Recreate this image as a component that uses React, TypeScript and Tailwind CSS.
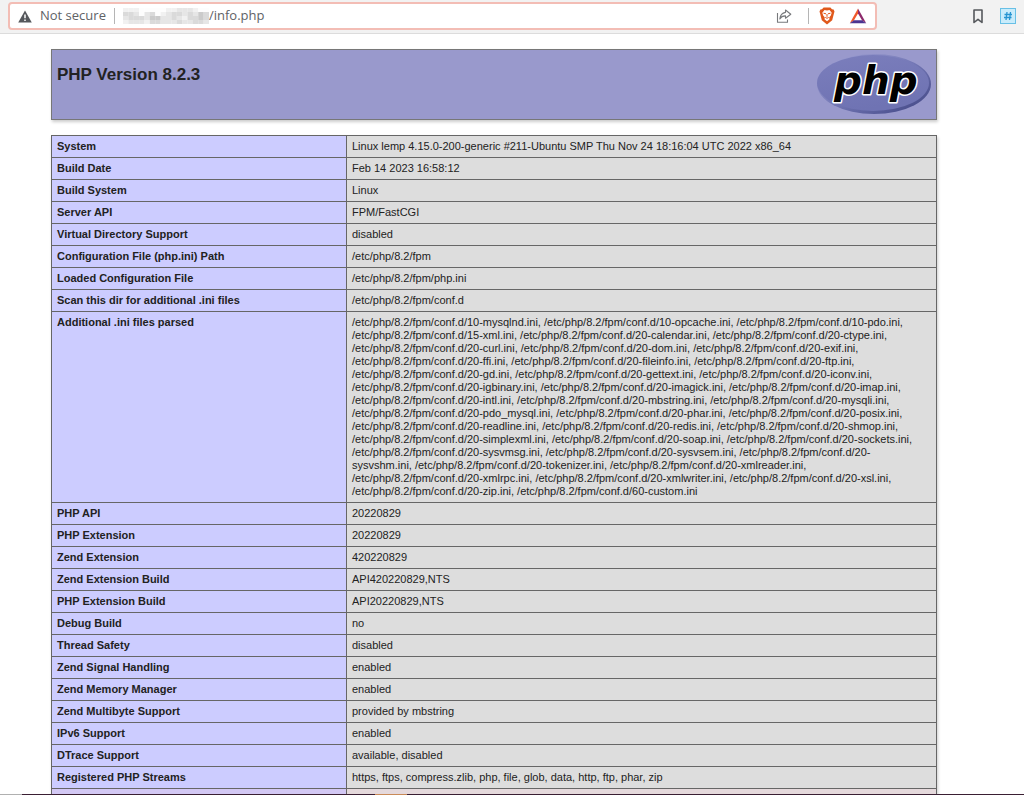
type InfoRow = {
    name: string;
    value: string | string[];
};

const rows: InfoRow[] = [
    {
        name: "System",
        value: "Linux lemp 4.15.0-200-generic #211-Ubuntu SMP Thu Nov 24 18:16:04 UTC 2022 x86_64",
    },
    { name: "Build Date", value: "Feb 14 2023 16:58:12" },
    { name: "Build System", value: "Linux" },
    { name: "Server API", value: "FPM/FastCGI" },
    { name: "Virtual Directory Support", value: "disabled" },
    { name: "Configuration File (php.ini) Path", value: "/etc/php/8.2/fpm" },
    { name: "Loaded Configuration File", value: "/etc/php/8.2/fpm/php.ini" },
    {
        name: "Scan this dir for additional .ini files",
        value: "/etc/php/8.2/fpm/conf.d",
    },
    {
        name: "Additional .ini files parsed",
        value: [
            "/etc/php/8.2/fpm/conf.d/10-mysqlnd.ini, /etc/php/8.2/fpm/conf.d/10-opcache.ini, /etc/php/8.2/fpm/conf.d/10-pdo.ini,",
            "/etc/php/8.2/fpm/conf.d/15-xml.ini, /etc/php/8.2/fpm/conf.d/20-calendar.ini, /etc/php/8.2/fpm/conf.d/20-ctype.ini,",
            "/etc/php/8.2/fpm/conf.d/20-curl.ini, /etc/php/8.2/fpm/conf.d/20-dom.ini, /etc/php/8.2/fpm/conf.d/20-exif.ini,",
            "/etc/php/8.2/fpm/conf.d/20-ffi.ini, /etc/php/8.2/fpm/conf.d/20-fileinfo.ini, /etc/php/8.2/fpm/conf.d/20-ftp.ini,",
            "/etc/php/8.2/fpm/conf.d/20-gd.ini, /etc/php/8.2/fpm/conf.d/20-gettext.ini, /etc/php/8.2/fpm/conf.d/20-iconv.ini,",
            "/etc/php/8.2/fpm/conf.d/20-igbinary.ini, /etc/php/8.2/fpm/conf.d/20-imagick.ini, /etc/php/8.2/fpm/conf.d/20-imap.ini,",
            "/etc/php/8.2/fpm/conf.d/20-intl.ini, /etc/php/8.2/fpm/conf.d/20-mbstring.ini, /etc/php/8.2/fpm/conf.d/20-mysqli.ini,",
            "/etc/php/8.2/fpm/conf.d/20-pdo_mysql.ini, /etc/php/8.2/fpm/conf.d/20-phar.ini, /etc/php/8.2/fpm/conf.d/20-posix.ini,",
            "/etc/php/8.2/fpm/conf.d/20-readline.ini, /etc/php/8.2/fpm/conf.d/20-redis.ini, /etc/php/8.2/fpm/conf.d/20-shmop.ini,",
            "/etc/php/8.2/fpm/conf.d/20-simplexml.ini, /etc/php/8.2/fpm/conf.d/20-soap.ini, /etc/php/8.2/fpm/conf.d/20-sockets.ini,",
            "/etc/php/8.2/fpm/conf.d/20-sysvmsg.ini, /etc/php/8.2/fpm/conf.d/20-sysvsem.ini, /etc/php/8.2/fpm/conf.d/20-",
            "sysvshm.ini, /etc/php/8.2/fpm/conf.d/20-tokenizer.ini, /etc/php/8.2/fpm/conf.d/20-xmlreader.ini,",
            "/etc/php/8.2/fpm/conf.d/20-xmlrpc.ini, /etc/php/8.2/fpm/conf.d/20-xmlwriter.ini, /etc/php/8.2/fpm/conf.d/20-xsl.ini,",
            "/etc/php/8.2/fpm/conf.d/20-zip.ini, /etc/php/8.2/fpm/conf.d/60-custom.ini",
        ],
    },
    { name: "PHP API", value: "20220829" },
    { name: "PHP Extension", value: "20220829" },
    { name: "Zend Extension", value: "420220829" },
    { name: "Zend Extension Build", value: "API420220829,NTS" },
    { name: "PHP Extension Build", value: "API20220829,NTS" },
    { name: "Debug Build", value: "no" },
    { name: "Thread Safety", value: "disabled" },
    { name: "Zend Signal Handling", value: "enabled" },
    { name: "Zend Memory Manager", value: "enabled" },
    { name: "Zend Multibyte Support", value: "provided by mbstring" },
    { name: "IPv6 Support", value: "enabled" },
    { name: "DTrace Support", value: "available, disabled" },
    {
        name: "Registered PHP Streams",
        value: "https, ftps, compress.zlib, php, file, glob, data, http, ftp, phar, zip",
    },
];

// gray levels of the pixelated host name, one string per row
const mosaic = ["1110000011222100", "3320230123323243", "2333244223213343", "1222133222322332"];
const grays = ["#fdfdfd", "#f1f1f1", "#e6e6e6", "#dadada", "#cbcbcb"];

function HiddenHost() {
    return (
        <svg viewBox="0 0 88 16" className="h-4 w-[86px] shrink-0" preserveAspectRatio="none" aria-hidden="true">
            {mosaic.map((line, y) =>
                line.split("").map((level, x) => (
                    <rect
                        key={`${x}-${y}`}
                        x={x * 5.5}
                        y={y * 4}
                        width="5.6"
                        height="4.1"
                        fill={grays[Number(level)]}
                    />
                ))
            )}
        </svg>
    );
}

function WarningIcon() {
    return (
        <svg viewBox="0 0 14 13" className="h-[13px] w-3.5 shrink-0">
            <path d="M7 0.5 13.8 12.5H0.2Z" fill="#55585c" />
            <path d="M7 4.5V8.3M7 9.5V11" stroke="#fff" strokeWidth="1.5" />
        </svg>
    );
}

function ShareIcon() {
    return (
        <svg
            viewBox="0 0 16 14"
            className="h-3.5 w-4"
            fill="none"
            stroke="#77797c"
            strokeWidth="1.1"
            strokeLinejoin="round"
        >
            <path d="M1.5 4V13.2H11.5V10.5" />
            <path d="M9.5 1 14.8 5.2 9.5 9.2V6.9C7 6.8 5 7.8 3.8 10 4.2 6.5 6 3.9 9.5 3.4Z" />
        </svg>
    );
}

function BraveIcon() {
    return (
        <svg viewBox="0 0 16 18" className="h-[18px] w-4">
            <path
                d="M4.6 0.5H11.4L13 2.3 14.6 2.5 15.5 4.6 15 6.2 13.2 13.2 8 17.5 2.8 13.2 1 6.2 0.5 4.6 1.4 2.5 3 2.3Z"
                fill="#e0581b"
            />
            <path
                d="M8 3.5 10.5 3.1 12.7 5.8 11.8 8.6 10.2 10.4 10.5 12.2 8 14.3 5.5 12.2 5.8 10.4 4.2 8.6 3.3 5.8 5.5 3.1Z"
                fill="#fff"
            />
            <path
                d="M4.5 6.2 7 6.8M11.5 6.2 9 6.8M8 7V9.8M6.3 10.4 8 11.3 9.7 10.4"
                fill="none"
                stroke="#e0581b"
                strokeWidth="1"
            />
        </svg>
    );
}

function RewardsIcon() {
    return (
        <svg viewBox="0 0 18 16" className="h-4 w-[18px]">
            <path d="M9 0.5 0.8 15.2 5 12.2 9 5.5Z" fill="#f0592b" />
            <path d="M9 0.5 17.2 15.2 13 12.2 9 5.5Z" fill="#8d2a6c" />
            <path d="M0.8 15.2H17.2L13 12.2H5Z" fill="#4c3590" />
        </svg>
    );
}

function BookmarkIcon() {
    return (
        <svg viewBox="0 0 10 15" className="h-[15px] w-2.5">
            <path
                d="M1 1H9V13.5L5 10.3 1 13.5Z"
                fill="none"
                stroke="#55585c"
                strokeWidth="1.6"
                strokeLinejoin="round"
            />
        </svg>
    );
}

function HashIcon() {
    return (
        <svg viewBox="0 0 16 16" className="h-4 w-4">
            <rect x="0.5" y="0.5" width="15" height="15" fill="#c9ecfb" stroke="#68c0e6" />
            <path
                d="M7 4 6 12M10.5 4 9.5 12M4.5 6.5H12M4 9.5H11.5"
                stroke="#2795d2"
                strokeWidth="1.3"
            />
        </svg>
    );
}

function PhpLogo() {
    return (
        <svg viewBox="0 0 116 62" className="h-[62px] w-[116px]" role="img" aria-label="PHP logo">
            <defs>
                <linearGradient id="rim" x1="0" y1="0" x2="1" y2="1">
                    <stop offset="0" stopColor="#a6a7d8" />
                    <stop offset="0.5" stopColor="#7377b5" />
                    <stop offset="1" stopColor="#3d4280" />
                </linearGradient>
                <linearGradient id="face" x1="0" y1="0" x2="0.3" y2="1">
                    <stop offset="0" stopColor="#7b7ebc" />
                    <stop offset="1" stopColor="#6f73b3" />
                </linearGradient>
            </defs>
            <ellipse cx="58" cy="30" rx="57" ry="30" fill="url(#rim)" />
            <ellipse cx="57" cy="29" rx="56" ry="28" fill="url(#face)" />
            <text
                x="18"
                y="40"
                fontSize="39"
                fill="#000"
                stroke="#fff"
                strokeWidth="3"
                paintOrder="stroke"
                strokeLinejoin="round"
                className="font-['DejaVu_Sans',sans-serif] font-bold italic"
            >
                php
            </text>
        </svg>
    );
}

function BrowserBar() {
    return (
        <header className="flex h-[34px] shrink-0 items-start border-b border-[#dcdcdc] bg-[#f2f2f2] pt-0.5 pr-2 pl-2 font-['Open_Sans',sans-serif] text-[13px] text-[#606266]">
            <div className="flex h-7 min-w-0 flex-1 items-center rounded border-2 border-[#f3bdb5] bg-white pr-2 pl-2">
                <button className="flex shrink-0 items-center gap-2">
                    <WarningIcon />
                    Not secure
                </button>
                <span className="mx-2 h-4 w-px shrink-0 bg-[#b5b5b5]" />
                <HiddenHost />
                <input
                    aria-label="Address"
                    defaultValue="/info.php"
                    className="min-w-0 flex-1 bg-transparent outline-none"
                />
                <button aria-label="Share this page">
                    <ShareIcon />
                </button>
                <span className="mr-2.5 ml-4 h-4 w-px bg-[#b5b5b5]" />
                <button aria-label="Brave Shields">
                    <BraveIcon />
                </button>
                <button aria-label="Brave Rewards" className="ml-3.5">
                    <RewardsIcon />
                </button>
            </div>
            <div className="ml-24 flex h-7 items-center gap-[17px]">
                <button aria-label="Bookmarks">
                    <BookmarkIcon />
                </button>
                <button aria-label="Extension">
                    <HashIcon />
                </button>
            </div>
        </header>
    );
}

export default function App() {
    return (
        <div className="flex h-screen flex-col overflow-hidden bg-white font-['Liberation_Sans',Arial,sans-serif] text-[#222]">
            <BrowserBar />
            <main className="min-h-0 flex-1 overflow-hidden pt-[15px] pr-[87px] pl-[51px]">
                <div className="mb-[15px] flex h-[71px] items-start justify-between border border-[#777] bg-[#9999cc] pt-1 pr-1 pl-[5px] shadow-[1px_2px_3px_#ccc]">
                    <h1 className="pt-[11px] text-[17px] leading-5 font-bold">PHP Version 8.2.3</h1>
                    <a href="#php" className="block">
                        <PhpLogo />
                    </a>
                </div>
                <table className="w-full border-collapse text-[11px] leading-[13px] shadow-[1px_2px_3px_#ccc]">
                    <tbody>
                        {rows.map((row) => (
                            <tr key={row.name}>
                                <th
                                    scope="row"
                                    className="w-1/3 border border-[#666] bg-[#ccccff] px-[5px] py-1 text-left align-top font-bold"
                                >
                                    {row.name}
                                </th>
                                <td className="border border-[#666] bg-[#dddddd] px-[5px] py-1 align-top">
                                    {Array.isArray(row.value)
                                        ? row.value.map((line) => <div key={line}>{line}</div>)
                                        : row.value}
                                </td>
                            </tr>
                        ))}
                        <tr className="h-[22px]">
                            <td className="border border-[#666] bg-[#d3c8f4]" />
                            <td className="border border-[#666] bg-[#e5d9dc]" />
                        </tr>
                    </tbody>
                </table>
            </main>
            <footer className="flex h-px shrink-0 bg-[#3a1f33]">
                <span className="w-[22px] bg-[#b0b0b0]" />
                <span className="ml-[353px] w-8 bg-[#c98a58]" />
            </footer>
        </div>
    );
}
